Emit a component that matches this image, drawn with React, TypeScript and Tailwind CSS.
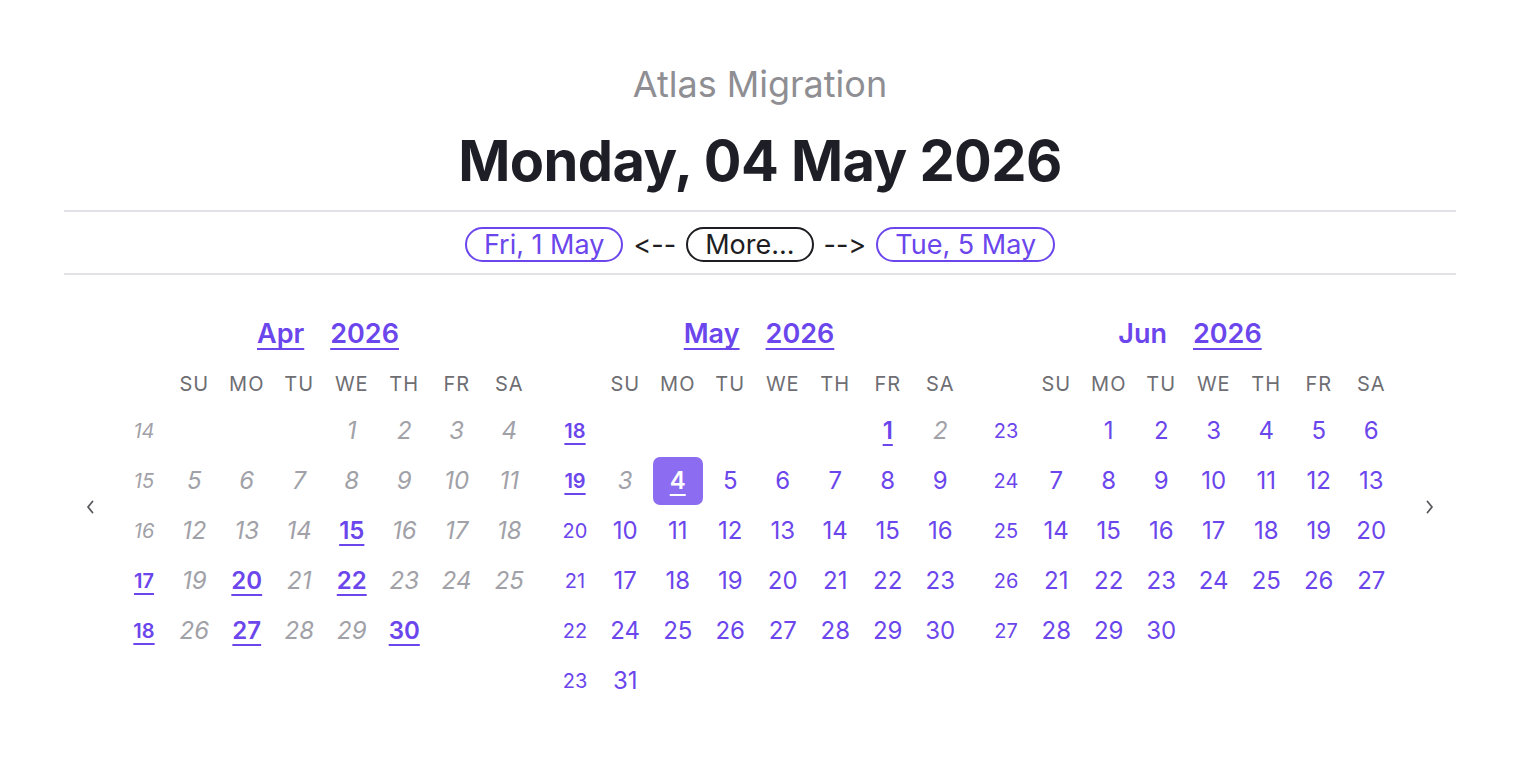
import type { ReactNode } from 'react';

type Kind = 'm' | 'l' | 'n' | 's';
type Day = [number, Kind] | null;

interface Week {
  wk: number;
  wkKind: Kind;
  days: Day[];
}

interface Month {
  name: string;
  nameLink: boolean;
  weeks: Week[];
}

const DAYS = ['SU', 'MO', 'TU', 'WE', 'TH', 'FR', 'SA'];

// build a week row from a start weekday, first day number and count
function row(wk: number, wkKind: Kind, lead: number, from: number, count: number, kinds: Record<number, Kind>, def: Kind): Week {
  const days: Day[] = [];
  for (let i = 0; i < lead; i++) days.push(null);
  for (let d = from; d < from + count; d++) days.push([d, kinds[d] ?? def]);
  return { wk, wkKind, days };
}

const aprKinds: Record<number, Kind> = { 15: 'l', 20: 'l', 22: 'l', 27: 'l', 30: 'l' };
const mayKinds: Record<number, Kind> = { 1: 'l', 2: 'm', 3: 'm', 4: 's' };

const MONTHS: Month[] = [
  {
    name: 'Apr',
    nameLink: true,
    weeks: [
      row(14, 'm', 3, 1, 4, aprKinds, 'm'),
      row(15, 'm', 0, 5, 7, aprKinds, 'm'),
      row(16, 'm', 0, 12, 7, aprKinds, 'm'),
      row(17, 'l', 0, 19, 7, aprKinds, 'm'),
      row(18, 'l', 0, 26, 5, aprKinds, 'm'),
    ],
  },
  {
    name: 'May',
    nameLink: true,
    weeks: [
      row(18, 'l', 5, 1, 2, mayKinds, 'n'),
      row(19, 'l', 0, 3, 7, mayKinds, 'n'),
      row(20, 'n', 0, 10, 7, mayKinds, 'n'),
      row(21, 'n', 0, 17, 7, mayKinds, 'n'),
      row(22, 'n', 0, 24, 7, mayKinds, 'n'),
      row(23, 'n', 0, 31, 1, mayKinds, 'n'),
    ],
  },
  {
    name: 'Jun',
    nameLink: false,
    weeks: [
      row(23, 'n', 1, 1, 6, {}, 'n'),
      row(24, 'n', 0, 7, 7, {}, 'n'),
      row(25, 'n', 0, 14, 7, {}, 'n'),
      row(26, 'n', 0, 21, 7, {}, 'n'),
      row(27, 'n', 0, 28, 3, {}, 'n'),
    ],
  },
];

const link = 'underline decoration-2 underline-offset-[5px] [text-decoration-skip-ink:none]';

function Chevron({ dir }: { dir: 'left' | 'right' }) {
  return (
    <svg width="8" height="14" viewBox="0 0 8 14" fill="none">
      <path
        d={dir === 'left' ? 'M6.5 1.5 L2 7 L6.5 12.5' : 'M1.5 1.5 L6 7 L1.5 12.5'}
        stroke="#58585e"
        strokeWidth="1.8"
        strokeLinecap="round"
        strokeLinejoin="round"
      />
    </svg>
  );
}

function Pill({ children, dark }: { children: ReactNode; dark?: boolean }) {
  return (
    <span
      className={
        'inline-flex h-[35px] items-center rounded-full border-2 px-[17px] text-[27px] leading-none ' +
        (dark ? 'border-[#1d1d22] text-[#1d1d22]' : 'border-[#6b46ec] text-[#6b46ec]')
      }
    >
      {children}
    </span>
  );
}

function WeekNum({ n, kind }: { n: number; kind: Kind }) {
  if (kind === 'm') return <span className="text-[20px] italic text-[#a1a1a8]">{n}</span>;
  if (kind === 'l') return <span className={'text-[20px] font-semibold text-[#6b46ec] ' + link}>{n}</span>;
  return <span className="text-[20px] text-[#6b46ec]">{n}</span>;
}

function DayCell({ day }: { day: Day }) {
  if (!day) return <div className="h-[50px]" />;
  const [n, kind] = day;
  let inner: ReactNode;
  if (kind === 's') {
    inner = (
      <span className={'flex h-[48px] w-[50px] items-center justify-center rounded-[7px] bg-[#8c6cf0] font-semibold text-white ' + link}>
        {n}
      </span>
    );
  } else if (kind === 'l') {
    inner = <span className={'font-semibold text-[#6b46ec] ' + link}>{n}</span>;
  } else if (kind === 'm') {
    inner = <span className="italic text-[#a1a1a8]">{n}</span>;
  } else {
    inner = <span className="text-[#6b46ec]">{n}</span>;
  }
  return <div className="flex h-[50px] items-center justify-center text-[24px]">{inner}</div>;
}

function MonthGrid({ month }: { month: Month }) {
  return (
    <div className="w-[416px]">
      <div className="flex h-[40px] items-center justify-center gap-[26px] text-[27px] font-semibold text-[#6b46ec]">
        <span className={month.nameLink ? link : ''}>{month.name}</span>
        <span className={link}>2026</span>
      </div>
      <div className="mt-[8px] grid grid-cols-[48px_repeat(7,52.5px)]">
        <div className="h-[44px]" />
        {DAYS.map((d) => (
          <div key={d} className="flex h-[44px] items-center justify-center text-[20px] tracking-[0.05em] text-[#6e6e73]">
            {d}
          </div>
        ))}
        {month.weeks.map((w) => (
          <div key={w.wk} className="contents">
            <div className="flex h-[50px] items-center justify-center">
              <WeekNum n={w.wk} kind={w.wkKind} />
            </div>
            {Array.from({ length: 7 }).map((_, i) => (
              <DayCell key={i} day={w.days[i] ?? null} />
            ))}
          </div>
        ))}
      </div>
    </div>
  );
}

export default function App() {
  return (
    <div className="min-h-screen bg-white px-16 pt-[63px] text-center font-['Inter',sans-serif] [font-feature-settings:'calt'_0,'liga'_0]">
      <div className="h-[42px] text-[36px] leading-[42px] text-[#8e8e93]">Atlas Migration</div>
      <h1 className="mt-[24px] h-[64px] text-[56px] font-bold leading-[64px] tracking-[-0.01em] text-[#1e1f26]">
        Monday, 04 May 2026
      </h1>
      <div className="mt-[17px] h-[2px] bg-[#e2e1e7]" />
      <div className="flex items-center justify-center gap-[10px] pb-[11px] pt-[15px] text-[27px] leading-none text-[#1d1d22]">
        <Pill>Fri, 1 May</Pill>
        <span>&lt;--</span>
        <Pill dark>More...</Pill>
        <span>--&gt;</span>
        <Pill>Tue, 5 May</Pill>
      </div>
      <div className="h-[2px] bg-[#e2e1e7]" />
      <div className="flex items-center pt-[39px]">
        <div className="flex w-[52px] justify-center pb-[6px]">
          <Chevron dir="left" />
        </div>
        <div className="ml-[4px] flex gap-[15px]">
          {MONTHS.map((m) => (
            <MonthGrid key={m.name} month={m} />
          ))}
        </div>
        <div className="flex flex-1 justify-center pb-[6px] pl-[6px]">
          <Chevron dir="right" />
        </div>
      </div>
    </div>
  );
}
